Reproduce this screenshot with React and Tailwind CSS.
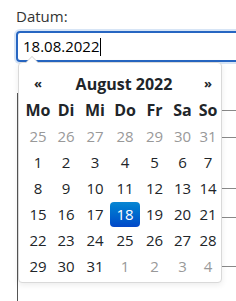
const weeks = [
  [[25, 1], [26, 1], [27, 1], [28, 1], [29, 1], [30, 1], [31, 1]],
  [[1], [2], [3], [4], [5], [6], [7]],
  [[8], [9], [10], [11], [12], [13], [14]],
  [[15], [16], [17], [18, 0, 1], [19], [20], [21]],
  [[22], [23], [24], [25], [26], [27], [28]],
  [[29], [30], [31], [1, 1], [2, 1], [3, 1], [4, 1]],
];

const dayNames = ['Mo', 'Di', 'Mi', 'Do', 'Fr', 'Sa', 'So'];

const cols = 'grid grid-cols-[28px_28px_30px_30px_29px_27px_24px]';

function DayCell({ day, old, active }) {
  if (active) {
    return (
      <div className="h-[26px] flex items-center justify-center">
        <span className="w-[31px] h-[25px] flex items-center justify-center rounded-[4px] text-white bg-gradient-to-b from-[#0a86d2] to-[#0447c8]">
          {day}
        </span>
      </div>
    );
  }
  return (
    <div className={`h-[26px] flex items-center justify-center ${old ? 'text-[#999]' : 'text-[#212529]'}`}>
      {day}
    </div>
  );
}

function Datepicker() {
  return (
    <div className="absolute left-[18px] top-[62px] w-[204px] h-[221px] bg-white border border-[#d9d9d9] rounded-[4px] shadow-[0_2px_6px_rgba(0,0,0,0.08)] pt-[8px] pl-[5px]">
      {/* caret */}
      <div className="absolute -top-[7px] left-[6px] w-0 h-0 border-l-[7px] border-r-[7px] border-b-[7px] border-l-transparent border-r-transparent border-b-[#d0d0d0]" />
      <div className="absolute -top-[6px] left-[7px] w-0 h-0 border-l-[6px] border-r-[6px] border-b-[6px] border-l-transparent border-r-transparent border-b-white" />
      <div className={`${cols} h-[26px] items-center text-[#212529]`}>
        <div className="text-center text-[13px] font-bold">«</div>
        <div className="col-span-5 text-center font-bold text-[16px]">August 2022</div>
        <div className="text-center text-[13px] font-bold">»</div>
      </div>
      <div className={`${cols} h-[26px] items-center font-bold text-[16px] text-[#212529]`}>
        {dayNames.map((d) => (
          <div key={d} className="text-center">{d}</div>
        ))}
      </div>
      {weeks.map((w, i) => (
        <div key={i} className={cols}>
          {w.map(([d, old, active], j) => (
            <DayCell key={j} day={d} old={old} active={active} />
          ))}
        </div>
      ))}
    </div>
  );
}

export default function App() {
  return (
    <div className="relative w-[236px] h-[301px] overflow-hidden bg-white font-['Open_Sans',sans-serif] text-[15px]">
      <div className="pl-[16px] pt-[5px] h-[31px] text-[#333]">Datum:</div>
      <div className="ml-[16px] w-[260px] h-[31px] border-2 border-[#2766c2] rounded-[4px] shadow-[0_0_0_2px_rgba(140,180,230,0.35)] flex items-center pl-[5px] text-black">
        <span>18.08.2022</span>
        <span className="w-px h-[18px] bg-black" />
      </div>
      <div className="mt-[31px] ml-[17px] border-l border-[#555]">
        <div className="h-[18px] border-b border-[#888]" />
        <div className="h-[27px] border-b border-[#888]" />
        <div className="h-[51px] border-b border-[#888]" />
        <div className="h-[29px] border-b border-[#888]" />
        <div className="h-[49px] border-b border-[#888]" />
        <div className="h-[40px]" />
      </div>
      <Datepicker />
    </div>
  );
}
